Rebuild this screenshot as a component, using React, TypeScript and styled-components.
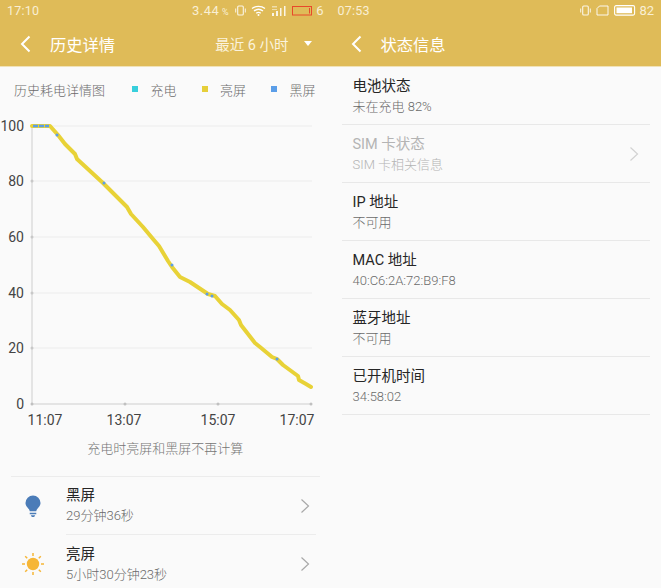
import React from 'react'
import styled, { createGlobalStyle } from 'styled-components'

const GlobalStyle = createGlobalStyle`
  html, body {
    margin: 0;
    padding: 0;
    background: #fafafa;
  }
  body {
    font-family: Roboto, "Noto Sans CJK SC", sans-serif;
    font-weight: 300;
  }
`

const curve =
  '32,125 50,125 58,134 65,143 75,153 77,158 90,170 103,182 114,193 127,206 131,213 143,226 153,238 159,245 168,260 172,266 180,276 190,281 205,291 208,293 215,295 222,303 230,309 239,319 241,324 255,342 260,346 272,356 277,358 283,364 298,375 299,379 306,383 311,386'

const darkDots = [
  [57, 134],
  [104, 182],
  [172, 264],
  [207, 293],
  [212, 295],
  [277, 358],
]

const gridLines = [125, 180, 236, 292, 347]
const yLabels = [
  { y: 125, text: '100' },
  { y: 180, text: '80' },
  { y: 236, text: '60' },
  { y: 292, text: '40' },
  { y: 347, text: '20' },
  { y: 403, text: '0' },
]
const xLabels = [
  { x: 45, tick: 32, text: '11:07' },
  { x: 124, tick: 125, text: '13:07' },
  { x: 218, tick: 218, text: '15:07' },
  { x: 297, tick: 311, text: '17:07' },
]

const BackIcon = () => (
  <svg width="12" height="18" viewBox="0 0 12 18">
    <path d="M10.500 1.500 3 9l7.500 7.500" fill="none" stroke="#fff" strokeWidth="2" />
  </svg>
)

const Chevron = ({ light }: { light?: boolean }) => (
  <svg width="10" height="16" viewBox="0 0 10 16">
    <path d="M1.500 1.500 8.500 8l-7 6.500" fill="none" stroke={light ? '#d2d2d2' : '#a8a8a8'} strokeWidth="1.200" />
  </svg>
)

const VibrateIcon = () => (
  <svg width="11" height="11" viewBox="0 0 11 11">
    <rect x="2.700" y="1" width="5.600" height="9" rx="1" fill="none" stroke="#fff" strokeWidth="1.100" opacity=".85" />
    <path d="M.7 3.500v4M10.300 3.500v4" stroke="#fff" strokeWidth="1" opacity=".85" />
  </svg>
)

const WifiIcon = () => (
  <svg width="15" height="11" viewBox="0 0 15 11">
    <path
      d="M1 3.600C4.600.6 10.400.6 14 3.600M3 6c2.600-2 6.400-2 9 0M5.200 8.300c1.300-1 3.300-1 4.600 0"
      fill="none"
      stroke="#fff"
      strokeWidth="1.300"
    />
    <circle cx="7.500" cy="10" r="1" fill="#fff" />
  </svg>
)

const SignalIcon = () => (
  <svg width="16" height="12" viewBox="0 0 16 12">
    <path d="M1 8h2v3H1zM5 6h2v5H5zM9 3h1.500v8H9zM13 1h1.500v10H13z" fill="#fff" opacity=".85" />
    <path d="M1 1h5v1.500H1zM1 4h5v1H1z" fill="#fff" opacity=".5" />
  </svg>
)

const LowBattery = () => (
  <svg width="21" height="10" viewBox="0 0 21 10">
    <rect x=".5" y=".5" width="19" height="8.500" fill="none" stroke="#e8492a" />
    <path d="M17.500 2v5.500" stroke="#e8492a" />
  </svg>
)

const SimIcon = () => (
  <svg width="13" height="11" viewBox="0 0 13 11">
    <path d="M3.500 1H12v9H1V3.500z" fill="none" stroke="#fff" strokeWidth="1" opacity=".9" />
  </svg>
)

const FullBattery = () => (
  <svg width="22" height="11" viewBox="0 0 22 11">
    <rect x=".6" y=".6" width="20" height="9.500" rx="1.500" fill="none" stroke="#fff" strokeWidth="1.100" />
    <rect x="2.500" y="2.500" width="15.500" height="5.700" fill="#fff" />
  </svg>
)

const BulbIcon = () => (
  <svg width="16" height="23" viewBox="0 0 18 26">
    <path
      d="M9 .5a8.500 8.500 0 0 0-8.500 8.500c0 3.600 2.900 5.200 4.100 7.500.5 1 .6 1.500.7 2h7.400c.1-.5.2-1 .7-2 1.200-2.300 4.100-3.900 4.100-7.500A8.500 8.500 0 0 0 9 .5z"
      fill="#4b7cb8"
    />
    <path d="M5.300 20h7.400v1.800H5.300zM6.500 22.800h5L10.300 25H7.700z" fill="#4b7cb8" />
  </svg>
)

const SunIcon = () => (
  <svg width="24" height="24" viewBox="0 0 24 24">
    <circle cx="12" cy="12" r="6.200" fill="#f6b637" />
    <path
      d="M12 1v3M12 20v3M1 12h3M20 12h3M4.200 4.200l2 2M17.800 17.800l2 2M4.200 19.800l2-2M17.800 6.200l2-2"
      stroke="#f6b637"
      strokeWidth="1.500"
    />
  </svg>
)

const HistoryChart = () => (
  <ChartSvg viewBox="0 100 331 330" width="331" height="330">
    {gridLines.map((y) => (
      <line key={y} x1="32" x2="312" y1={y} y2={y} stroke="#f1f1f1" strokeWidth="1.500" />
    ))}
    <line x1="32" x2="32" y1="125" y2="403" stroke="#dcdcdc" strokeWidth="1.500" />
    <line x1="32" x2="312" y1="403" y2="403" stroke="#dcdcdc" strokeWidth="1.500" />
    {gridLines.map((y) => (
      <circle key={y} cx="32" cy={y} r="1.500" fill="#c8c8c8" />
    ))}
    {xLabels.map((l) => (
      <circle key={l.text} cx={l.tick} cy="403" r="1.500" fill="#c0c0c0" />
    ))}
    <polyline
      points={curve}
      fill="none"
      stroke="#e8d237"
      strokeWidth="4"
      strokeLinejoin="round"
      strokeLinecap="round"
    />
    <line x1="33" x2="49" y1="125" y2="125" stroke="#5b9ee8" strokeWidth="2.500" strokeDasharray="5 1" />
    {darkDots.map(([x, y]) => (
      <circle key={`${x}-${y}`} cx={x} cy={y} r="1.500" fill="#5b9ee8" />
    ))}
    {yLabels.map((l) => (
      <AxisText key={l.text} x="24" y={l.y + 5} textAnchor="end">
        {l.text}
      </AxisText>
    ))}
    {xLabels.map((l) => (
      <AxisText key={l.text} x={l.x} y="424" textAnchor="middle">
        {l.text}
      </AxisText>
    ))}
  </ChartSvg>
)

const App: React.FC = () => (
  <Screens>
    <GlobalStyle />
    <Phone>
      <Header>
        <StatusBar>
          <Clock>17:10</Clock>
          <StatusIcons>
            <Speed>
              3.44<small> %</small>
            </Speed>
            <VibrateIcon />
            <WifiIcon />
            <SignalIcon />
            <LowBattery />
            <Level>6</Level>
          </StatusIcons>
        </StatusBar>
        <TitleBar>
          <BackIcon />
          <Title>历史详情</Title>
          <RangePicker>
            最近 6 小时
            <Caret />
          </RangePicker>
        </TitleBar>
      </Header>
      <Legend>
        <LegendTitle>历史耗电详情图</LegendTitle>
        <LegendItem color="#38cfdc">充电</LegendItem>
        <LegendItem color="#e6cf3a">亮屏</LegendItem>
        <LegendItem color="#5b9ee8">黑屏</LegendItem>
      </Legend>
      <HistoryChart />
      <Note>充电时亮屏和黑屏不再计算</Note>
      <UsageList>
        <UsageRow>
          <UsageIcon>
            <BulbIcon />
          </UsageIcon>
          <UsageBody>
            <div>
              <RowTitle>黑屏</RowTitle>
              <RowSub>29分钟36秒</RowSub>
            </div>
            <Chevron />
          </UsageBody>
        </UsageRow>
        <UsageRow>
          <UsageIcon>
            <SunIcon />
          </UsageIcon>
          <UsageBody>
            <div>
              <RowTitle>亮屏</RowTitle>
              <RowSub>5小时30分钟23秒</RowSub>
            </div>
            <Chevron />
          </UsageBody>
        </UsageRow>
      </UsageList>
    </Phone>
    <Phone>
      <Header>
        <StatusBar>
          <Clock>07:53</Clock>
          <StatusIcons>
            <VibrateIcon />
            <SimIcon />
            <FullBattery />
            <Level>82</Level>
          </StatusIcons>
        </StatusBar>
        <TitleBar>
          <BackIcon />
          <Title>状态信息</Title>
        </TitleBar>
      </Header>
      <InfoList>
        <InfoRow>
          <div>
            <RowTitle>电池状态</RowTitle>
            <RowSub>未在充电 82%</RowSub>
          </div>
        </InfoRow>
        <InfoRow>
          <div>
            <RowTitle disabled>SIM 卡状态</RowTitle>
            <RowSub disabled>SIM 卡相关信息</RowSub>
          </div>
          <Chevron light />
        </InfoRow>
        <InfoRow>
          <div>
            <RowTitle>IP 地址</RowTitle>
            <RowSub>不可用</RowSub>
          </div>
        </InfoRow>
        <InfoRow>
          <div>
            <RowTitle>MAC 地址</RowTitle>
            <RowSub>40:C6:2A:72:B9:F8</RowSub>
          </div>
        </InfoRow>
        <InfoRow>
          <div>
            <RowTitle>蓝牙地址</RowTitle>
            <RowSub>不可用</RowSub>
          </div>
        </InfoRow>
        <InfoRow>
          <div>
            <RowTitle>已开机时间</RowTitle>
            <RowSub>34:58:02</RowSub>
          </div>
        </InfoRow>
      </InfoList>
    </Phone>
  </Screens>
)

const Screens = styled.div`
  width: 661px;
  height: 588px;
  display: flex;
  overflow: hidden;
  background: #fafafa;
`

const Phone = styled.div`
  flex: 0 0 330.5px;
  display: flex;
  flex-direction: column;
  overflow: hidden;
`

const Header = styled.div`
  height: 66px;
  flex: none;
  background: #dfbb58;
  border-bottom: 1px solid #f0e2b8;
  color: #fff;
`

const StatusBar = styled.div`
  height: 21px;
  display: flex;
  align-items: center;
  justify-content: space-between;
  padding: 0 7px;
  font-weight: 400;
  color: #f9efd4;
`

const Clock = styled.span`
  font-size: 12.5px;
  letter-spacing: 0.2px;
`

const StatusIcons = styled.div`
  display: flex;
  align-items: center;
  gap: 5px;
`

const Speed = styled.span`
  font-size: 13px;
  letter-spacing: 0.5px;
  margin-right: 1px;

  small {
    font-size: 9px;
  }
`

const Level = styled.span`
  font-size: 13px;
  margin-left: -2px;
`

const TitleBar = styled.div`
  height: 45px;
  display: flex;
  align-items: center;
  padding: 0 19px;
`

const Title = styled.h1`
  margin: 0 0 0 19px;
  font-size: 16.3px;
  font-weight: 400;
  color: #fff;
`

const RangePicker = styled.div`
  margin-left: auto;
  display: flex;
  align-items: center;
  font-size: 14.5px;
  color: #fbf3dd;
  font-weight: 400;
`

const Caret = styled.span`
  margin-left: 15px;
  width: 0;
  height: 0;
  border-left: 4px solid transparent;
  border-right: 4px solid transparent;
  border-top: 5px solid #fff;
`

const Legend = styled.div`
  height: 44px;
  flex: none;
  display: flex;
  align-items: center;
  padding: 0 15px 0 14px;
  font-size: 13px;
  color: #6a6a6a;
  white-space: nowrap;
`

const LegendTitle = styled.span`
  margin-right: auto;
`

const LegendItem = styled.span<{ color: string }>`
  display: flex;
  align-items: center;
  margin-left: 25.5px;

  &::before {
    content: '';
    width: 6px;
    height: 6px;
    margin-right: 12px;
    background: ${(p) => p.color};
  }
`

const ChartSvg = styled.svg`
  display: block;
  flex: none;
  margin-top: -10px;
`

const AxisText = styled.text`
  font-family: Roboto, sans-serif;
  font-size: 14px;
  font-weight: 400;
  fill: #444;
`

const Note = styled.div`
  height: 36px;
  flex: none;
  font-size: 13px;
  line-height: 36px;
  text-align: center;
  color: #757575;
`

const UsageList = styled.div`
  margin: 9px 11px 0;
  border-top: 1px solid #ececec;
`

const UsageRow = styled.div`
  height: 58px;
  display: flex;
  align-items: center;
`

const UsageIcon = styled.div`
  width: 55px;
  flex: none;
  display: flex;
  justify-content: center;
  padding-right: 11px;
  box-sizing: border-box;
`

const UsageBody = styled.div`
  flex: 1;
  align-self: stretch;
  display: flex;
  align-items: center;
  justify-content: space-between;
  padding-right: 6px;
  margin-right: 4px;
  border-bottom: 1px solid #ececec;

  ${UsageRow}:last-child & {
    border-bottom: none;
  }
`

const RowTitle = styled.div<{ disabled?: boolean }>`
  font-size: 14.5px;
  font-weight: 400;
  line-height: 21px;
  color: ${(p) => (p.disabled ? '#b4b4b4' : '#262626')};
`

const RowSub = styled.div<{ disabled?: boolean }>`
  font-size: 13px;
  line-height: 20px;
  color: ${(p) => (p.disabled ? '#b4b4b4' : '#6a6a6a')};
`

const InfoList = styled.div`
  display: flex;
  flex-direction: column;
  margin: 0 11px;
`

const InfoRow = styled.div`
  height: 56px;
  display: flex;
  align-items: center;
  justify-content: space-between;
  padding: 1px 11px 0;
  border-bottom: 1px solid #e8e8e8;
`

export default App
